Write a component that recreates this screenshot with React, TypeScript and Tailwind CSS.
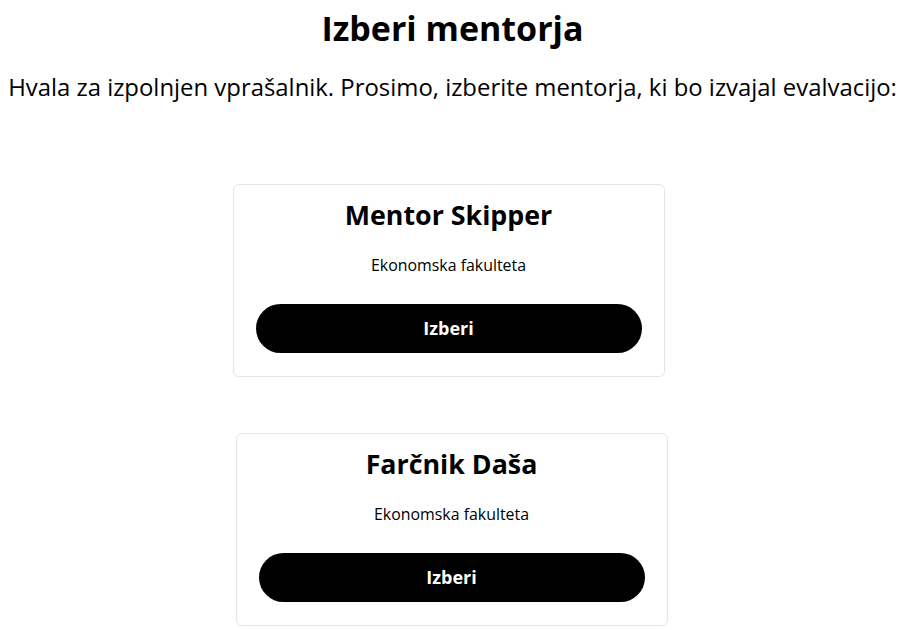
import React from "react";

const mentors = [
  { name: "Mentor Skipper", faculty: "Ekonomska fakulteta", shift: "-translate-x-[4px]" },
  { name: "Farčnik Daša", faculty: "Ekonomska fakulteta", shift: "-translate-x-[1px]" },
];

export default function App() {
  return (
    <div
      className="min-h-[630px] w-full bg-white text-black flex flex-col items-center"
      style={{ fontFamily: '"Open Sans", "Noto Sans", sans-serif' }}
    >
      <h1 className="mt-[6px] text-[34px] leading-[44px] font-bold">Izberi mentorja</h1>
      <p className="mt-[21px] text-[23.9px] leading-[32px] whitespace-nowrap">
        Hvala za izpolnjen vprašalnik. Prosimo, izberite mentorja, ki bo izvajal evalvacijo:
      </p>
      <div className="mt-[81px] flex flex-col gap-[56px]">
        {mentors.map((m) => (
          <div
            key={m.name}
            className={`w-[432px] h-[193px] border border-[#e3e5e8] rounded-md px-[22px] pt-[11px] flex flex-col items-center ${m.shift}`}
          >
            <h2 className="text-[26.8px] leading-[38px] font-bold">{m.name}</h2>
            <p className="mt-[20px] text-[15.9px] leading-[22px]">{m.faculty}</p>
            <button className="mt-[28px] w-full h-[49px] rounded-full bg-black text-white text-[18px] font-bold">
              Izberi
            </button>
          </div>
        ))}
      </div>
    </div>
  );
}
